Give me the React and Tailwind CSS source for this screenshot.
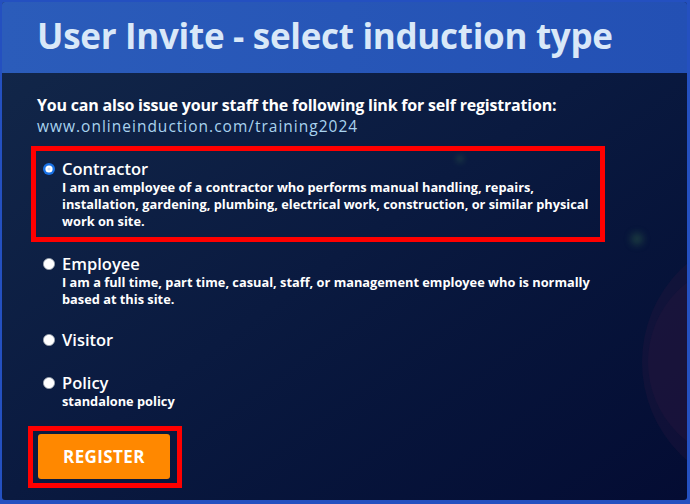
import React from "react";

function Radio({ checked }) {
  if (checked) {
    return (
      <svg width="12" height="12" viewBox="0 0 12 12" className="shrink-0 mt-[4px]">
        <circle cx="6" cy="6" r="6" fill="#1a73e8" />
        <circle cx="6" cy="6" r="3.6" fill="#ffffff" />
        <circle cx="6" cy="6" r="1.6" fill="#cfe0fb" />
      </svg>
    );
  }
  return (
    <svg width="12" height="12" viewBox="0 0 12 12" className="shrink-0 mt-[4px]">
      <circle cx="6" cy="6" r="5.6" fill="#ffffff" stroke="#9aa3ad" strokeWidth="0.8" />
    </svg>
  );
}

function Option({ checked, title, desc, boxed }) {
  const inner = (
    <div className="flex gap-[7px] items-start">
      <Radio checked={checked} />
      <div className="flex flex-col">
        <span className="text-[16.5px] leading-[20px] font-semibold text-white">{title}</span>
        {desc && (
          <span className="text-[12.8px] leading-[17px] font-bold text-white whitespace-nowrap">{desc}</span>
        )}
      </div>
    </div>
  );
  if (boxed) {
    return (
      <div className="border-[5px] border-[#ff0000] w-[574px] -ml-[6px] pl-[7px] pr-[6px] pt-[8px] pb-[7px]">
        {inner}
      </div>
    );
  }
  return <div className="pl-[6px]">{inner}</div>;
}

export default function App() {
  return (
    <div
      className="w-[690px] h-[504px] bg-[#2450c0] pt-[2px] pl-[2px] pr-[3px] pb-[4px] overflow-hidden"
      style={{ fontFamily: "'Open Sans', 'Noto Sans', sans-serif" }}
    >
      <div className="relative w-full h-full rounded-[3px] overflow-hidden flex flex-col bg-gradient-to-br from-[#13284a] via-[#0a1a40] to-[#040c33]">
        <div className="absolute left-[640px] top-[230px] w-[260px] h-[260px] rounded-full bg-[#2a1840] opacity-30 pointer-events-none" />
        <div className="absolute left-[646px] top-[260px] w-[200px] h-[200px] rounded-full bg-[#2a1840] opacity-30 pointer-events-none" />
        <div className="absolute left-[630px] top-[232px] w-[10px] h-[10px] rounded-full bg-[#3d7a4a] blur-[4px] opacity-60 pointer-events-none" />
        <div className="absolute left-[455px] top-[154px] w-[6px] h-[6px] rounded-full bg-[#3d7a4a] blur-[3px] opacity-50 pointer-events-none" />

        <div className="h-[71px] shrink-0 bg-gradient-to-r from-[#2b5cba] to-[#2350b4] flex items-center pl-[35px]">
          <h1 className="text-[35px] font-bold text-[#d9e8f8] tracking-[-0.3px] leading-none -mt-[4px]">
            User Invite - select induction type
          </h1>
        </div>

        <div className="relative flex flex-col pl-[35px] pt-[21px]">
          <p className="text-[16px] leading-[22px] font-bold text-white tracking-[-0.2px]">
            You can also issue your staff the following link for self registration:
          </p>
          <p className="text-[15.5px] leading-[20px] text-[#a9d3ef] tracking-[1px]">
            www.onlineinduction.com/training2024
          </p>

          <div className="flex flex-col mt-[10px]">
            <Option
              boxed
              checked
              title="Contractor"
              desc={
                <>
                  I am an employee of a contractor who performs manual handling, repairs,
                  <br />
                  installation, gardening, plumbing, electrical work, construction, or similar physical
                  <br />
                  work on site.
                </>
              }
            />
            <div className="mt-[12px]">
              <Option
                title="Employee"
                desc={
                  <>
                    I am a full time, part time, casual, staff, or management employee who is normally
                    <br />
                    based at this site.
                  </>
                }
              />
            </div>
            <div className="mt-[22px]">
              <Option title="Visitor" />
            </div>
            <div className="mt-[23px]">
              <Option title="Policy" desc="standalone policy" />
            </div>
          </div>

          <div className="mt-[16px] -ml-[9px] w-[154px] h-[62px] border-[5px] border-[#ff0000] pl-[5px] pt-[3px]">
            <button className="w-[132px] h-[45px] bg-[#ff8800] rounded-[3px] text-white font-bold text-[17px] tracking-[0.4px]">
              REGISTER
            </button>
          </div>
        </div>
      </div>
    </div>
  );
}
